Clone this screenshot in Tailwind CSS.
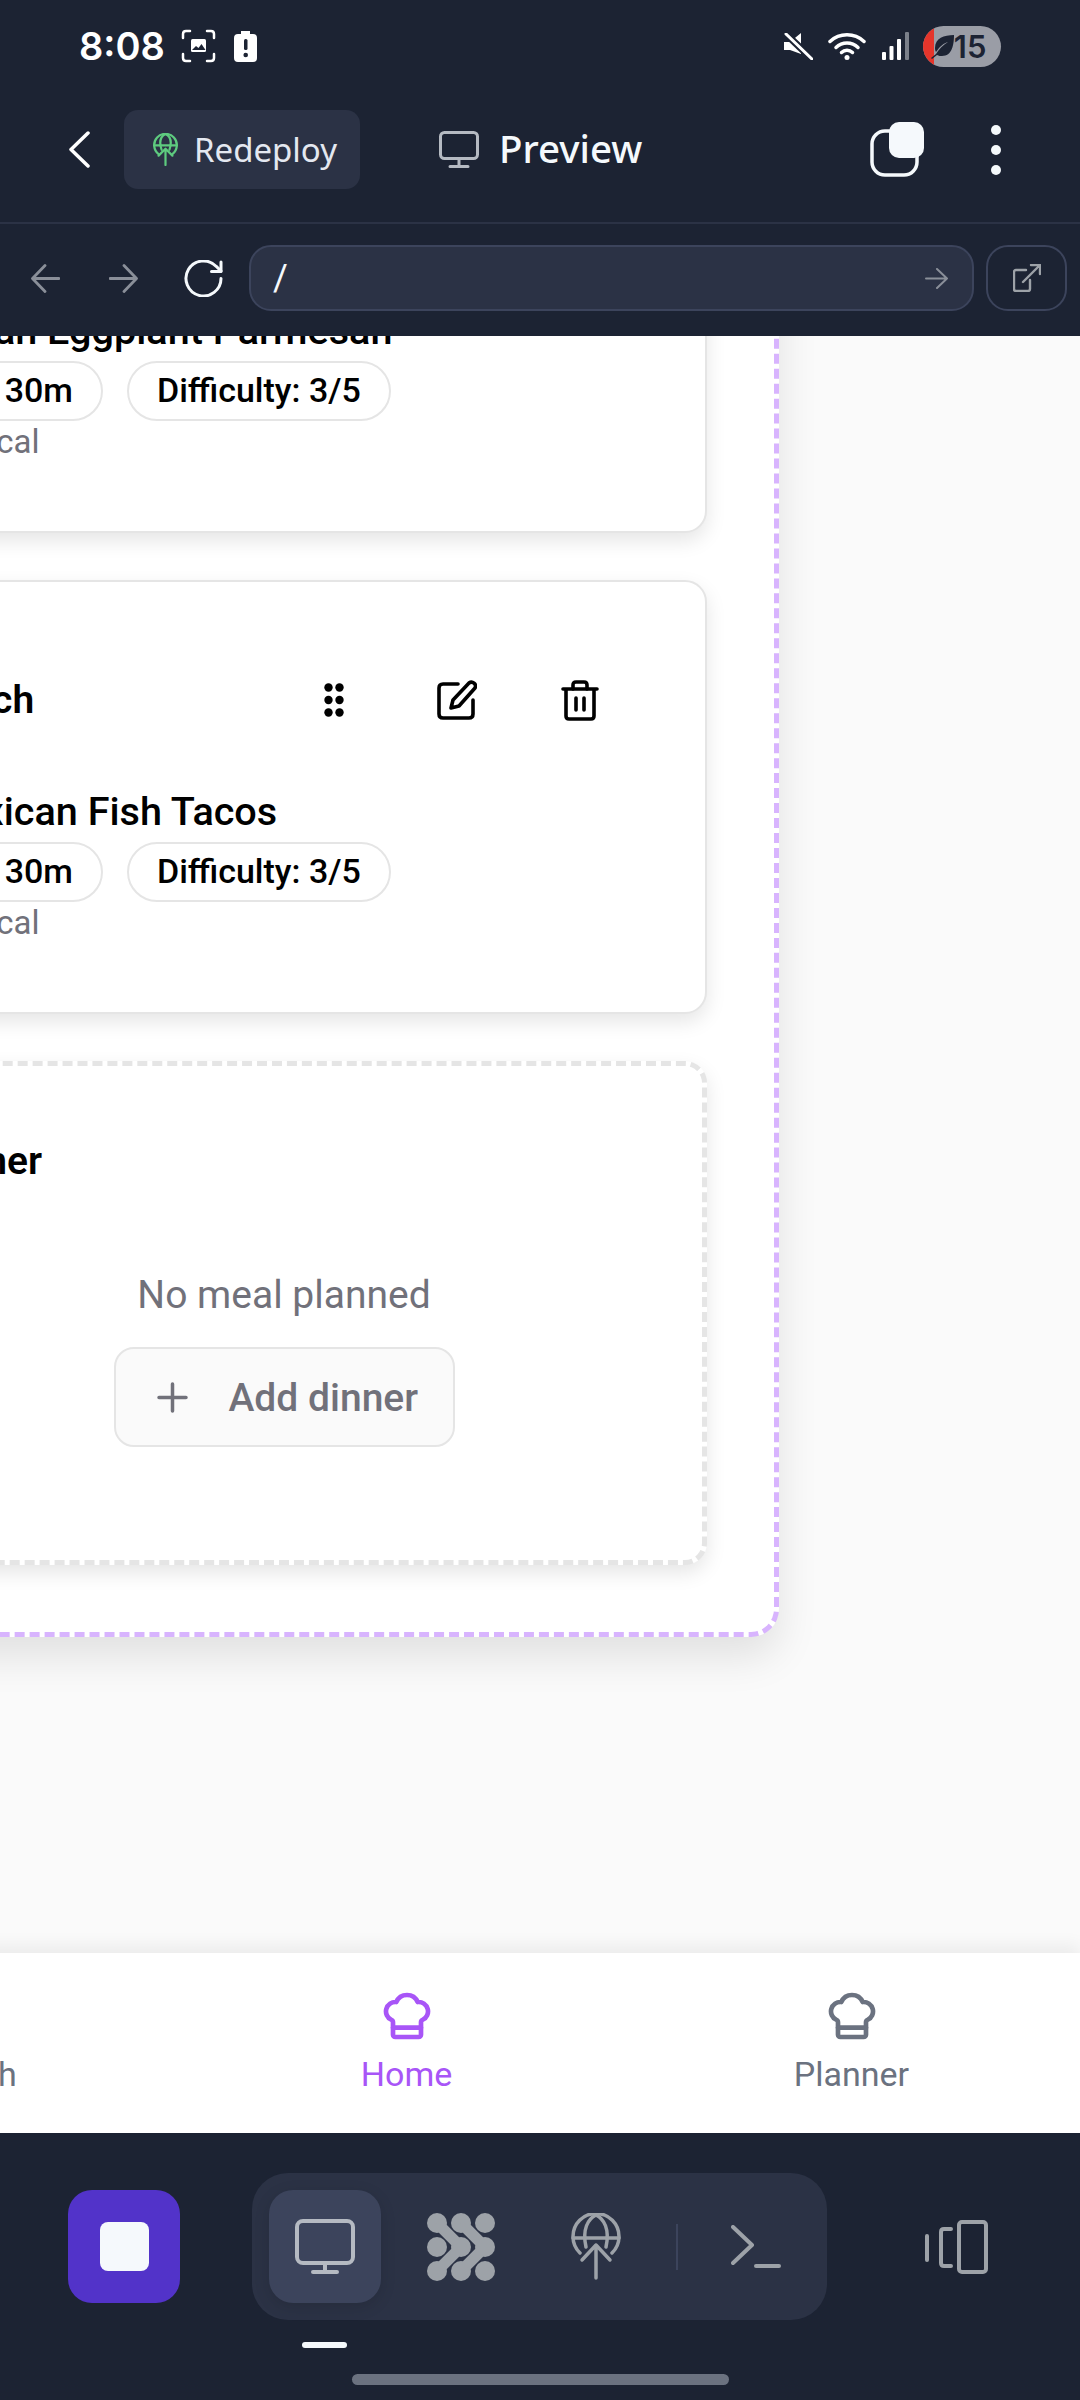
<!DOCTYPE html>
<html lang="en">

<head>
    <meta charset="UTF-8" />
    <meta name="viewport" content="width=device-width, initial-scale=1.0" />
    <title>Preview</title>
    <script src="https://cdn.jsdelivr.net/npm/@tailwindcss/browser@4"></script>
</head>

<body class="w-[1080px] h-[2400px] overflow-hidden flex flex-col bg-[#1c2333] font-['Roboto',sans-serif]">

    <!-- Status bar -->
    <div class="h-[110px] shrink-0 pb-[18px] flex items-center text-white">
        <span class="ml-[79px] text-[38px] font-semibold leading-none font-['Inter',sans-serif]">8:08</span>
        <svg class="ml-[16px] w-[35px] h-[34px]" viewBox="0 0 35 34" fill="none" stroke="white" stroke-width="2.5" stroke-linecap="round">
            <path d="M2 9V5q0-3 3-3h4M26 2h4q3 0 3 3v4M33 25v4q0 3-3 3h-4M9 32H5q-3 0-3-3v-4" />
            <path d="M10 11.500q0-1.500 1.500-1.500h12q1.500 0 1.500 1.500v10q0 1.500-1.500 1.500h-12q-1.500 0-1.500-1.500z" fill="white" stroke="none" />
            <path d="M11 21l4-4 2.500 2 3-4 4 6z" fill="#1c2333" stroke="none" />
        </svg>
        <svg class="ml-[18px] w-[23px] h-[31px]" viewBox="0 0 23 31">
            <path d="M7 0h9v3h3q4 0 4 4v20q0 4-4 4H4q-4 0-4-4V7q0-4 4-4h3z" fill="white" />
            <rect x="10" y="8" width="3.500" height="11" rx="1.500" fill="#1c2333" />
            <circle cx="11.700" cy="24" r="2.300" fill="#1c2333" />
        </svg>
        <svg class="ml-[527px] w-[29px] h-[27px]" viewBox="0 0 29 27">
            <path d="M0 9h6l11-9v21L6 17H0z" fill="white" />
            <path d="M2 1l26 25" stroke="#1c2333" stroke-width="7" />
            <path d="M2 1l26 25" stroke="white" stroke-width="3" stroke-linecap="round" />
        </svg>
        <svg class="ml-[15px] w-[38px] h-[28px]" viewBox="0 0 38 28" fill="none" stroke="white" stroke-width="3.500" stroke-linecap="round">
            <path d="M2 9.500a25 25 0 0 1 34 0" />
            <path d="M8 15.500a16 16 0 0 1 22 0" />
            <path d="M13.500 20.500a8 8 0 0 1 11 0" />
            <circle cx="19" cy="25.500" r="2.500" fill="white" stroke="none" />
        </svg>
        <svg class="ml-[16px] w-[27px] h-[28px]" viewBox="0 0 27 28">
            <rect x="0" y="20" width="4" height="8" rx="1" fill="white" />
            <rect x="7.500" y="14" width="4" height="14" rx="1" fill="white" />
            <rect x="15" y="7" width="4" height="21" rx="1" fill="white" />
            <rect x="23" y="0" width="4" height="28" rx="1" fill="#7b808a" />
        </svg>
        <div class="relative ml-[14px] w-[78px] h-[41px] rounded-full overflow-hidden bg-[#9a9da6] flex items-center">
            <div class="absolute left-0 top-0 bottom-0 w-[11px] bg-[#e5352b]"></div>
            <svg class="relative ml-[7px] w-[25px] h-[25px]" viewBox="0 0 25 25">
                <path d="M24 1C14 1 5 4 5 14c0 2 .5 3 1 4C10 12 14 9 18 8c-5 3-9 7-12 12l-5 4 1 1 5-4c2 1 3 1 5 1C22 22 24 11 24 1z" fill="#1c2333" />
            </svg>
            <span class="ml-[-1px] text-[31px] font-semibold leading-none text-[#1c2333] font-['Inter',sans-serif]">15</span>
        </div>
    </div>

    <!-- Toolbar -->
    <div class="h-[114px] shrink-0 border-b-2 border-[#2b3245] flex items-start">
        <div class="h-[79px] w-full flex items-center">
            <svg class="ml-[69px] w-[21px] h-[37px]" viewBox="0 0 21 37" fill="none" stroke="white" stroke-width="3.500" stroke-linecap="round" stroke-linejoin="round">
                <path d="M19 2L2 18.500 19 35" />
            </svg>
            <button class="ml-[34px] w-[236px] h-[79px] rounded-[14px] bg-[#2b3245] flex items-center">
                <svg class="ml-[29px] w-[25px] h-[33px]" viewBox="0 0 50 67" fill="none" stroke="#5ecb7f" stroke-width="4.500" stroke-linecap="round" stroke-linejoin="round">
                    <path d="M11 43a23 23 0 1 1 28 0" />
                    <path d="M17 34C11 16 17 6 25 2c8 4 14 14 8 32" />
                    <path d="M2 25h46" />
                    <path d="M25 65V32M11 46l14-14 14 14" />
                </svg>
                <span class="ml-[16px] text-[33px] leading-none text-[#e4e8f0] font-['Noto_Sans',sans-serif]">Redeploy</span>
            </button>
            <svg class="ml-[79px] w-[40px] h-[37px]" viewBox="0 0 40 37" fill="none" stroke="#b5bac2" stroke-width="3" stroke-linecap="round">
                <rect x="1.500" y="1.500" width="37" height="26" rx="4" />
                <path d="M20 28v7M11 35.500h18" />
            </svg>
            <span class="ml-[20px] mb-[2px] text-[38.500px] font-medium leading-none text-[#f5f9fc] font-['Noto_Sans',sans-serif]">Preview</span>
            <svg class="ml-auto w-[54px] h-[55px]" viewBox="0 0 54 55">
                <rect x="2" y="9" width="45" height="44" rx="13" fill="none" stroke="#f5f9fc" stroke-width="3.500" />
                <rect x="19" y="0" width="35" height="36" rx="10" fill="#f5f9fc" />
            </svg>
            <svg class="ml-[67px] mr-[79px] w-[10px] h-[50px]" viewBox="0 0 10 50" fill="#f5f9fc">
                <circle cx="5" cy="5" r="5" />
                <circle cx="5" cy="25" r="5" />
                <circle cx="5" cy="45" r="5" />
            </svg>
        </div>
    </div>

    <!-- URL bar -->
    <div class="h-[112px] shrink-0 pt-[21px] flex items-start">
        <div class="h-[66px] flex items-center">
            <svg class="ml-[31px] w-[29px] h-[29px]" viewBox="0 0 29 29" fill="none" stroke="#8a8f99" stroke-width="2.800" stroke-linecap="round" stroke-linejoin="round">
                <path d="M28 14.500H2M14 1.500L1.500 14.500 14 27.500" />
            </svg>
            <svg class="ml-[49px] w-[29px] h-[29px]" viewBox="0 0 29 29" fill="none" stroke="#8a8f99" stroke-width="2.800" stroke-linecap="round" stroke-linejoin="round">
                <path d="M1 14.500h26M15 1.500l12.500 13L15 27.500" />
            </svg>
            <svg class="ml-[44px] w-[41px] h-[37px]" viewBox="0 0 41 37" fill="none" stroke="#f5f9fc" stroke-width="3" stroke-linecap="round" stroke-linejoin="round">
                <path d="M39 18.500a17.500 17.500 0 1 1-5-12.300L39 11" />
                <path d="M39 2v9.500H29.500" />
            </svg>
        </div>
        <div class="ml-[26px] w-[725px] h-[66px] rounded-[22px] bg-[#2b3245] border-2 border-[#3c445c] flex items-center">
            <span class="ml-[22px] text-[36px] leading-none text-[#f5f9fc]">/</span>
            <svg class="ml-auto mr-[24px] w-[23px] h-[21px]" viewBox="0 0 23 21" fill="none" stroke="#8a8f99" stroke-width="2" stroke-linecap="round" stroke-linejoin="round">
                <path d="M1 10.500h21M12 1l10 9.500L12 20" />
            </svg>
        </div>
        <div class="ml-[12px] w-[81px] h-[66px] rounded-[22px] border-2 border-[#3c445c] flex items-center justify-center">
            <svg class="w-[28px] h-[28px]" viewBox="0 0 28 28" fill="none" stroke="#9da2a8" stroke-width="2.400" stroke-linecap="round" stroke-linejoin="round">
                <path d="M13 6H3q-2 0-2 2v17q0 2 2 2h12q2 0 2-2V16" />
                <path d="M10 18L27 1M18 1h9v9" />
            </svg>
        </div>
    </div>

    <!-- Scrolled page content -->
    <main class="h-[1617px] shrink-0 overflow-hidden bg-[#fafafa]">
        <div class="w-[990px] -ml-[211px] -mt-[309px] p-[67px] bg-white border-[5px] border-dashed border-[#d8b4fe] rounded-[28px] shadow-[0_20px_40px_rgba(0,0,0,0.1)] flex flex-col gap-[47px]">

            <!-- Breakfast, top is scrolled under the toolbar -->
            <div class="bg-white border-2 border-[#e5e5e5] rounded-[22px] shadow-[0_8px_20px_rgba(0,0,0,0.1)] pt-[88px] pb-[69px] pl-[65px]">
                <div class="h-[60px] flex items-center text-[39px] font-semibold text-black">Breakfast</div>
                <div class="mt-[60px] h-[44px] flex items-center text-[39.600px] font-medium text-black whitespace-nowrap">Italian Eggplant Parmesan</div>
                <div class="mt-[8px] flex gap-[24px]">
                    <span class="h-[60px] px-[28px] pb-[2px] rounded-full border-2 border-[#e5e5e5] flex items-center text-[34px] font-medium text-black">1h 30m</span>
                    <span class="h-[60px] px-[28px] pb-[2px] rounded-full border-2 border-[#e5e5e5] flex items-center text-[34px] font-medium text-black">Difficulty: 3/5</span>
                </div>
                <div class="mt-px -ml-[12px] h-[40px] flex items-center text-[33px] text-[#71717a]">450 kcal</div>
            </div>

            <!-- Lunch -->
            <div class="bg-white border-2 border-[#e5e5e5] rounded-[22px] shadow-[0_8px_20px_rgba(0,0,0,0.1)] pt-[88px] pb-[69px] pl-[65px]">
                <div class="h-[60px] pr-[84px] flex items-center justify-between">
                    <span class="text-[39px] font-semibold text-black">Lunch</span>
                    <div class="flex gap-[41px]">
                        <button class="w-[82px] h-[60px] flex items-center justify-center">
                            <svg class="w-[20px] h-[34px]" viewBox="0 0 20 34" fill="black">
                                <circle cx="4.500" cy="4.500" r="4.200" />
                                <circle cx="15.500" cy="4.500" r="4.200" />
                                <circle cx="4.500" cy="17" r="4.200" />
                                <circle cx="15.500" cy="17" r="4.200" />
                                <circle cx="4.500" cy="29.500" r="4.200" />
                                <circle cx="15.500" cy="29.500" r="4.200" />
                            </svg>
                        </button>
                        <button class="w-[82px] h-[60px] flex items-center justify-center">
                            <svg class="w-[40px] h-[40px]" viewBox="0 0 40 40" fill="none" stroke="black" stroke-width="3.600" stroke-linecap="round" stroke-linejoin="round">
                                <path d="M21 4H6q-4 0-4 4v26q0 4 4 4h26q4 0 4-4V20" />
                                <path d="M32 3a4 4 0 0 1 6 5L22 26l-8 2 2-8z" />
                            </svg>
                        </button>
                        <button class="w-[82px] h-[60px] flex items-center justify-center">
                            <svg class="w-[38px] h-[41px]" viewBox="0 0 38 41" fill="none" stroke="black" stroke-width="3.600" stroke-linecap="round" stroke-linejoin="round">
                                <path d="M2 9h34M5 9v27q0 3 3 3h22q3 0 3-3V9" />
                                <path d="M12 9V5q0-3 3-3h8q3 0 3 3v4" />
                                <path d="M15 18v12M23 18v12" />
                            </svg>
                        </button>
                    </div>
                </div>
                <div class="mt-[60px] h-[44px] flex items-center text-[39.600px] font-medium text-black whitespace-nowrap">Mexican Fish Tacos</div>
                <div class="mt-[8px] flex gap-[24px]">
                    <span class="h-[60px] px-[28px] pb-[2px] rounded-full border-2 border-[#e5e5e5] flex items-center text-[34px] font-medium text-black">1h 30m</span>
                    <span class="h-[60px] px-[28px] pb-[2px] rounded-full border-2 border-[#e5e5e5] flex items-center text-[34px] font-medium text-black">Difficulty: 3/5</span>
                </div>
                <div class="mt-px -ml-[12px] h-[40px] flex items-center text-[33px] text-[#71717a]">520 kcal</div>
            </div>

            <!-- Dinner, nothing planned -->
            <div class="bg-white border-[5px] border-dashed border-[#e5e5e5] rounded-[22px] shadow-[0_8px_20px_rgba(0,0,0,0.1)] pt-[65px] pb-[113px] flex flex-col items-center">
                <div class="w-full h-[60px] pl-[62px] flex items-center text-[39px] font-semibold text-black">Dinner</div>
                <div class="mt-[82px] h-[44px] flex items-center text-[39px] text-[#71717a]">No meal planned</div>
                <button class="mt-[30px] w-[341px] h-[100px] rounded-[20px] bg-[#fafafa] border-2 border-[#e5e5e5] flex items-center">
                    <svg class="ml-[41px] w-[31px] h-[31px]" viewBox="0 0 31 31" fill="none" stroke="#71717a" stroke-width="3.500" stroke-linecap="round">
                        <path d="M15.500 2v27M2 15.500h27" />
                    </svg>
                    <span class="ml-[41px] pt-[2px] text-[39px] font-medium leading-none text-[#71717a]">Add dinner</span>
                </button>
            </div>
        </div>
    </main>

    <!-- App tab bar -->
    <nav class="h-[180px] shrink-0 bg-white shadow-[0_-8px_16px_rgba(0,0,0,0.06)] relative -ml-[261px] w-[1341px] flex">
        <div class="w-[445px] pt-[35px] flex flex-col items-center text-[34px] text-[#6b7280]">
            <svg class="w-[56px] h-[56px]" viewBox="0 0 24 24" fill="none" stroke="currentColor" stroke-width="2" stroke-linecap="round" stroke-linejoin="round">
                <circle cx="11" cy="11" r="8" />
                <path d="m21 21-4.300-4.300" />
            </svg>
            <span class="mt-[9px] ml-[6px] leading-[42px]">Search</span>
        </div>
        <div class="w-[445px] pt-[35px] flex flex-col items-center text-[34px] text-[#a855f7]">
            <svg class="w-[56px] h-[56px]" viewBox="0 0 24 24" fill="none" stroke="currentColor" stroke-width="2" stroke-linecap="round" stroke-linejoin="round">
                <path d="M17 21a1 1 0 0 0 1-1v-5.350c0-.457.316-.844.727-1.041a4 4 0 0 0-2.134-7.589 5 5 0 0 0-9.186 0 4 4 0 0 0-2.134 7.588c.411.198.727.585.727 1.041V20a1 1 0 0 0 1 1Z" />
                <path d="M6 17h12" />
            </svg>
            <span class="mt-[9px] leading-[42px]">Home</span>
        </div>
        <div class="w-[445px] pt-[35px] flex flex-col items-center text-[34px] text-[#6b7280]">
            <svg class="w-[56px] h-[56px]" viewBox="0 0 24 24" fill="none" stroke="currentColor" stroke-width="2" stroke-linecap="round" stroke-linejoin="round">
                <path d="M17 21a1 1 0 0 0 1-1v-5.350c0-.457.316-.844.727-1.041a4 4 0 0 0-2.134-7.589 5 5 0 0 0-9.186 0 4 4 0 0 0-2.134 7.588c.411.198.727.585.727 1.041V20a1 1 0 0 0 1 1Z" />
                <path d="M6 17h12" />
            </svg>
            <span class="mt-[9px] leading-[42px]">Planner</span>
        </div>
    </nav>

    <!-- Bottom workspace bar -->
    <div class="flex-1 pt-[40px]">
        <div class="h-[147px] flex items-center">
            <button class="ml-[68px] w-[112px] h-[113px] rounded-[24px] bg-[#5233c9] flex items-center justify-center">
                <span class="block w-[49px] h-[49px] rounded-[8px] bg-[#f5f9fc]"></span>
            </button>
            <div class="ml-[72px] w-[575px] h-[147px] rounded-[36px] bg-[#2b3245] pl-[17px] flex items-center">
                <div class="w-[112px] h-[113px] rounded-[24px] bg-[#3c445c] shadow-[0_4px_16px_rgba(0,0,0,0.12)] flex items-center justify-center">
                    <svg class="w-[60px] h-[55px]" viewBox="0 0 60 55" fill="none" stroke="#b5bac2" stroke-width="4" stroke-linecap="round">
                        <rect x="2" y="2" width="56" height="42" rx="6" />
                        <path d="M30 44v9M18 53h24" />
                    </svg>
                </div>
                <div class="ml-[12px] w-[135px] flex justify-center">
                    <svg class="w-[68px] h-[68px]" viewBox="0 0 68 68" fill="#9da2a8">
                        <circle cx="10" cy="10" r="10" />
                        <circle cx="34" cy="10" r="10" />
                        <circle cx="58" cy="10" r="10" />
                        <circle cx="10" cy="34" r="10" />
                        <circle cx="34" cy="34" r="10" />
                        <circle cx="58" cy="34" r="10" />
                        <circle cx="10" cy="58" r="10" />
                        <circle cx="34" cy="58" r="10" />
                        <circle cx="58" cy="58" r="10" />
                        <path d="M10 10L34 34 10 58" fill="none" stroke="#9da2a8" stroke-width="11" stroke-linejoin="round" />
                        <path d="M34 10L58 34 34 58" fill="none" stroke="#9da2a8" stroke-width="11" stroke-linejoin="round" />
                    </svg>
                </div>
                <div class="w-[135px] flex justify-center">
                    <svg class="w-[50px] h-[67px]" viewBox="0 0 50 67" fill="none" stroke="#9da2a8" stroke-width="3.500" stroke-linecap="round" stroke-linejoin="round">
                        <path d="M9 40a23 23 0 1 1 32 0" />
                        <path d="M15 34C11 16 17 6 25 2c8 4 14 14 10 32" />
                        <path d="M2 25h46" />
                        <path d="M25 65V32M11 47l14-15 14 15" />
                    </svg>
                </div>
                <div class="ml-[13px] w-[2px] h-[46px] bg-[#3c445c]"></div>
                <div class="ml-[8px] w-[140px] flex justify-center">
                    <svg class="w-[50px] h-[44px]" viewBox="0 0 50 44" fill="none" stroke="#9da2a8" stroke-width="4" stroke-linecap="round" stroke-linejoin="round">
                        <path d="M2 2l19 18L2 38" />
                        <path d="M25 41h23" />
                    </svg>
                </div>
            </div>
            <svg class="ml-[98px] w-[63px] h-[54px]" viewBox="0 0 63 54" fill="none" stroke="#9da2a8" stroke-width="4" stroke-linecap="round" stroke-linejoin="round">
                <path d="M2 16v24" />
                <path d="M26 9h-7q-3 0-3 3v31q0 3 3 3h7" />
                <rect x="34" y="2" width="27" height="50" rx="3" />
            </svg>
        </div>
        <div class="ml-[302px] mt-[22px] w-[45px] h-[6px] rounded-full bg-[#f5f9fc]"></div>
        <div class="mx-auto mt-[26px] w-[377px] h-[11px] rounded-full bg-[#6b7280]"></div>
    </div>
</body>

</html>
